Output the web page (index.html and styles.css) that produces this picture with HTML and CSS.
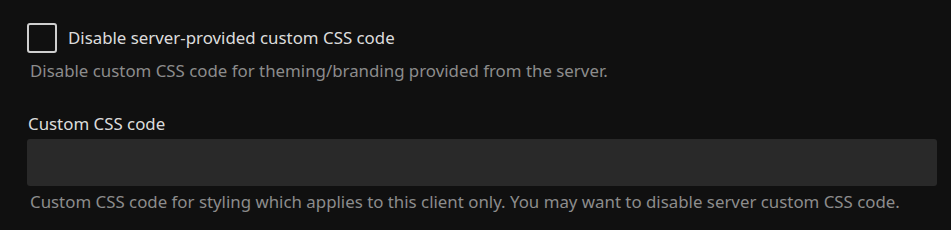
FILE: index.html
```html
<!DOCTYPE html>
<html lang="en">
<head>
  <meta charset="UTF-8">
  <title>Custom CSS</title>
  <meta name="viewport" content="width=device-width, initial-scale=1.0">
  <link rel="stylesheet" href="styles.css">
</head>
<body>
  <div class="settings">
    <div class="checkbox-field">
      <label class="checkbox-label">
        <input type="checkbox" class="checkbox">
        <span>Disable server-provided custom CSS code</span>
      </label>
      <div class="field-desc">Disable custom CSS code for theming/branding provided from the server.</div>
    </div>

    <div class="input-field">
      <label class="field-label" for="customCss">Custom CSS code</label>
      <textarea id="customCss" class="css-input"></textarea>
      <div class="field-desc">Custom CSS code for styling which applies to this client only. You may want to disable server custom CSS code.</div>
    </div>
  </div>
</body>
</html>
```

FILE: styles.css
```css
html, body { margin: 0; background: #101010; }
body { font-family: "Noto Sans", sans-serif; font-size: 16.85px; line-height: 24px; color: rgba(255,255,255,0.87); padding: 23px 14px 0 27px; }
.checkbox-field { margin-bottom: 29px; }
.checkbox-label { display: flex; align-items: center; gap: 11px; height: 30px; }
.checkbox { appearance: none; -webkit-appearance: none; margin: 0; width: 30px; height: 30px; box-sizing: border-box; border: 2px solid #cfcfcf; border-radius: 3px; background: transparent; }
.field-desc { color: #8c8c8c; padding-left: 3px; margin-top: 6px; }
.css-input + .field-desc { margin-top: 4px; }
.field-label { display: block; padding-left: 1px; margin-bottom: 3px; }
.css-input { display: block; width: 100%; box-sizing: border-box; height: 47px; border: 0; border-radius: 3px; background: #292929; color: #fff; resize: none; }
```
